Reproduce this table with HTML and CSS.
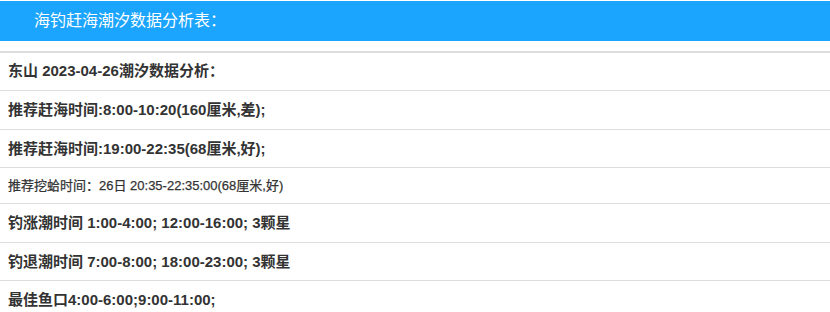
FILE: index.html
```html
<!DOCTYPE html>
<html lang="zh">
<head>
<meta charset="utf-8">
<title>海钓赶海潮汐数据分析表</title>
<link rel="stylesheet" href="styles.css">
</head>
<body>
<div class="page">
  <div class="header">海钓赶海潮汐数据分析表：</div>
  <div class="table">
    <div class="row first">东山 2023-04-26潮汐数据分析：</div>
    <div class="row">推荐赶海时间:8:00-10:20(160厘米,差);</div>
    <div class="row">推荐赶海时间:19:00-22:35(68厘米,好);</div>
    <div class="row small">推荐挖蛤时间：26日 20:35-22:35:00(68厘米,好)</div>
    <div class="row">钓涨潮时间 1:00-4:00; 12:00-16:00; 3颗星</div>
    <div class="row">钓退潮时间 7:00-8:00; 18:00-23:00; 3颗星</div>
    <div class="row">最佳鱼口4:00-6:00;9:00-11:00;</div>
  </div>
</div>
</body>
</html>
```
FILE: styles.css
```css
html, body {
  margin: 0;
  padding: 0;
  background: #fff;
}
body {
  font-family: "Liberation Sans", Arial, "Noto Sans CJK SC", sans-serif;
  color: #333;
}
.page {
  padding-top: 1px;
}
.header {
  background: #1ca5fe;
  color: #fff;
  font-size: 16px;
  height: 40px;
  line-height: 40px;
  padding-left: 34px;
}
.table {
  margin-top: 10px;
  border-top: 2px solid #ddd;
}
.row {
  font-size: 15px;
  font-weight: bold;
  line-height: 18px;
  padding: 10px 8px 9.5px;
  border-bottom: 1px solid #ddd;
}
.row.first {
  padding-top: 9px;
  padding-bottom: 10px;
}
.row.small {
  font-size: 13px;
  font-weight: normal;
  -webkit-text-stroke: 0.25px #333;
  line-height: 16px;
  padding: 10px 8px 9px;
}
```
